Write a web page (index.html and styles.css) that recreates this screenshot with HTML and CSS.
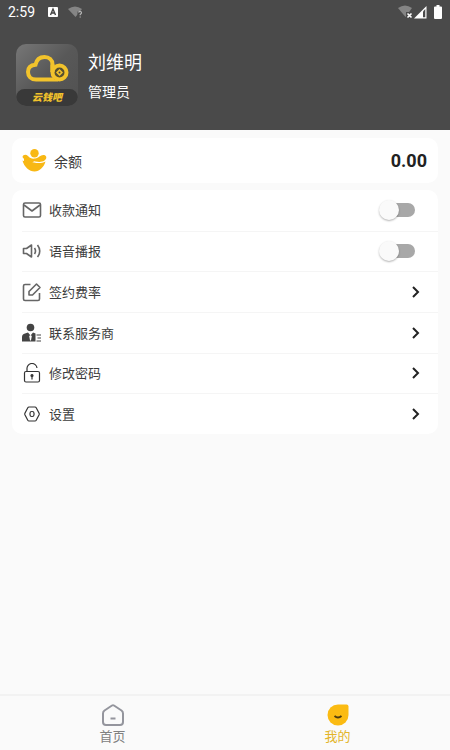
FILE: index.html
```html
<!DOCTYPE html>
<html lang="zh-CN">
<head>
<meta charset="utf-8">
<meta name="viewport" content="width=device-width, initial-scale=1">
<title>我的</title>
<link rel="stylesheet" href="styles.css">
</head>
<body>
<header class="header">
  <div class="status">
    <time class="clock">2:59</time>
    <svg class="status-app" width="10" height="10" viewBox="0 0 10 10"><rect width="10" height="10" rx="1" fill="#fff"/><path d="M2.500 8 5 2 7.500 8M3.500 6h3" fill="none" stroke="#444" stroke-width="1.400"/></svg>
    <svg width="16" height="12" viewBox="0 0 16 12"><path d="M0 3Q7 -2 14 3L7.500 11Z" fill="#858585"/><path d="M9.500 5.500h5V12h-5z" fill="#4a4a4a"/><path d="M10.500 6.500q1-1.500 2.500-.8 1.300 1.300-.8 2.700v.8M12.200 10.500v1" fill="none" stroke="#b5b5b5" stroke-width="1.200"/></svg>
    <span class="status-right">
      <svg width="15" height="14" viewBox="0 0 15 14"><path d="M0 3Q7 -2 14 3L7.500 12Z" fill="#858585"/><path d="M8 7h7v7H8z" fill="#4a4a4a"/><path d="m9.500 8.500 4 4m0-4-4 4" stroke="#fff" stroke-width="1.600"/></svg>
      <svg width="13" height="13" viewBox="0 0 13 13"><path d="M0 12.500 12.500 0v12.500z" fill="#fff"/><path d="M9 5.500 11.300 3v8.300H9z" fill="#4a4a4a"/></svg>
      <svg class="battery" width="8" height="14" viewBox="0 0 8 14"><path d="M2.500 0h3v1.500H7q1 0 1 1V13q0 1-1 1H1q-1 0-1-1V2.500q0-1 1-1h1.500z" fill="#fff"/></svg>
    </span>
  </div>
  <div class="profile">
    <div class="logo">
      <svg class="logo-mark" width="44" height="28" viewBox="0 0 44 28"><path d="M33 25.500H11C6 25.500 3 22 3 18c0-4.500 3-7 7.500-7.300C11.500 6 14.500 3 19.500 3c4.500 0 8 3 8 7.500V18" fill="none" stroke="#f2c32c" stroke-width="4"/><path d="M27 17c0 3.500 1 6 3.500 8" fill="none" stroke="#8d7018" stroke-width="2"/><circle cx="34.500" cy="18.500" r="7" fill="#57502f" stroke="#f2c32c" stroke-width="4"/><path d="M27.500 10.500V18" stroke="#f2c32c" stroke-width="4"/><path d="m34.500 15 3.500 3.500-3.500 3.500-3.500-3.500z" fill="#f2c32c"/><circle cx="34.500" cy="18.500" r="1" fill="#444"/></svg>
      <span class="logo-name">云钱吧</span>
    </div>
    <div class="person">
      <h1 class="name">刘维明</h1>
      <p class="role">管理员</p>
    </div>
  </div>
</header>
<main class="content">
  <section class="card balance">
    <svg width="25" height="23" viewBox="0 0 25 23"><circle cx="12.500" cy="4.200" r="4.200" fill="#f8b814"/><path d="M.5 8C1 5.500 4 5 6 7c2 2.200 4 3 7 2.500 4-.7 5.500-4 9-3.500 3 .6 3 4 .5 5.500C19 14 14 12.500 9 11.800 5 11.300 2 11 .5 8Z" fill="#f8b814"/><path d="M.5 11.500C4 13.500 8 12.500 12 13.500c4 1 8 .8 11.500-1-1.500 5.500-6 10-11 10S2 18 .5 11.500Z" fill="#f8b814"/><path d="M2 9h6l4 3.500L8 15 2 13z" fill="#f8b814"/></svg>
    <h2 class="balance-label">余额</h2>
    <strong class="amount">0.00</strong>
  </section>
  <ul class="card list">
    <li class="row">
      <label class="item">
        <svg class="icon" viewBox="0 0 20 20"><rect x="1.500" y="3" width="17" height="14" rx="1.500"/><path d="m2 5 8 6 8-6"/></svg>
        <span class="text">收款通知</span><input class="switch" type="checkbox" role="switch">
      </label>
    </li>
    <li class="row">
      <label class="item">
        <svg class="icon" viewBox="0 0 20 20"><path d="M1.500 7.500h3L9.500 4v12l-5-3.500h-3zM12.500 7q2 3 0 6M15.500 4q4.500 6 0 12"/></svg>
        <span class="text">语音播报</span><input class="switch" type="checkbox" role="switch">
      </label>
    </li>
    <li class="row">
      <a class="item" href="#rate">
        <svg class="icon" viewBox="0 0 20 20"><path d="M8.500 2.500H3q-1.500 0-1.500 1.500v13q0 1.500 1.500 1.500h13q1.500 0 1.500-1.500v-6M7 13V9.500L14.500 2l3.500 3.500-7.500 7.500z"/></svg>
        <span class="text">签约费率</span><svg class="arrow" viewBox="0 0 8 12"><path d="m1 1 5 5-5 5"/></svg>
      </a>
    </li>
    <li class="row">
      <a class="item" href="#service">
        <svg class="icon solid" viewBox="0 0 20 20"><circle cx="8.500" cy="4.500" r="3.800"/><path d="M0 18.500v-4.500q0-2.800 3-3.500l3-1 2.500 3 2.500-3 2.500 1v8zM14.500 11.500h4.500v1h-4.500zM15.500 14.500h3.500v1h-3.500zM14.500 17.500h4.500v1h-4.500z"/><path d="m8.500 12 1.300 1-.8 4.500H8L7.200 13z" fill="#fff"/></svg>
        <span class="text">联系服务商</span><svg class="arrow" viewBox="0 0 8 12"><path d="m1 1 5 5-5 5"/></svg>
      </a>
    </li>
    <li class="row">
      <a class="item" href="#password">
        <svg class="icon dark" viewBox="0 0 20 20"><rect x="2.500" y="8.500" width="15" height="10.500" rx="1.500"/><path d="M5 8V6a5 5 0 0 1 10-1M10 13v3.500"/><circle cx="10" cy="12.500" r="1" fill="#333"/></svg>
        <span class="text">修改密码</span><svg class="arrow" viewBox="0 0 8 12"><path d="m1 1 5 5-5 5"/></svg>
      </a>
    </li>
    <li class="row">
      <a class="item" href="#settings">
        <svg class="icon dark" viewBox="0 0 20 20"><path d="M7 3h6q.8 0 1.200.7l2.900 5.600q.3.700 0 1.400l-2.900 5.600q-.4.700-1.200.7H7q-.8 0-1.200-.7l-2.900-5.600q-.3-.7 0-1.400l2.900-5.600Q6.200 3 7 3z"/><rect x="8" y="7.500" width="4" height="5" rx="1.800"/></svg>
        <span class="text">设置</span><svg class="arrow" viewBox="0 0 8 12"><path d="m1 1 5 5-5 5"/></svg>
      </a>
    </li>
  </ul>
</main>
<nav class="tabs">
  <a class="tab" href="#home">
    <svg width="24" height="24" viewBox="0 0 24 24"><path d="M11 2.500 3.500 7.500Q2 8.500 2 10.500V19q0 3 3 3h14q3 0 3-3v-8.500q0-2-1.500-3L13 2.500q-1-.6-2 0z" fill="none" stroke="#94959d" stroke-width="2"/><path d="M9.500 15.500h5" stroke="#94959d" stroke-width="2"/></svg>
    <span>首页</span>
  </a>
  <a class="tab active" href="#me" aria-current="page">
    <svg width="24" height="24" viewBox="0 0 24 24"><path d="M12 1.500h8.500q2 0 2 2V12A10.500 10.500 0 1 1 12 1.500z" fill="#fbbb12"/><path d="M8.500 13q3.500 3 7 0" fill="none" stroke="#4c3b10" stroke-width="1.800"/></svg>
    <span>我的</span>
  </a>
</nav>
</body>
</html>
```
FILE: styles.css
```css
* {
  box-sizing: border-box;
}

body {
  margin: 0;
  min-height: 100vh;
  display: flex;
  flex-direction: column;
  background: #fafafa;
  color: #3c3c3c;
  font-family: Roboto, "Noto Sans CJK SC", sans-serif;
}

h1, h2, p, ul {
  margin: 0;
  padding: 0;
  font-weight: 400;
}

a {
  color: inherit;
  text-decoration: none;
}

svg {
  display: block;
  flex: none;
}

.header {
  height: 130px;
  background: #4a4a4a;
  color: #fff;
}

.status {
  display: flex;
  align-items: center;
  height: 24px;
  padding: 0 8px;
}

.clock {
  font-size: 14px;
  line-height: 24px;
}

.status-app {
  margin: 0 10px 0 13px;
}

.status-right {
  display: flex;
  align-items: center;
  gap: 1px;
  margin-left: auto;
}

.battery {
  margin-left: 6px;
}

.profile {
  display: flex;
  align-items: center;
  gap: 10px;
  padding: 20px 16px;
}

.logo {
  display: flex;
  flex-direction: column;
  align-items: center;
  justify-content: space-between;
  width: 62px;
  height: 62px;
  padding-top: 10px;
  border-radius: 10px;
  overflow: hidden;
  background: linear-gradient(135deg, #777, #585858 50%, #515151);
}

.logo-name {
  width: 100%;
  border-radius: 10px;
  background: #393939;
  color: #f2c32c;
  font-size: 10px;
  font-style: italic;
  font-weight: 900;
  line-height: 17px;
  text-align: center;
}

.person {
  padding-top: 4px;
}

.name {
  font-size: 18px;
  line-height: 30px;
}

.role {
  font-size: 14px;
  line-height: 28px;
}

.content {
  flex: 1;
  display: flex;
  flex-direction: column;
  gap: 7px;
  padding: 8px 12px;
}

.card {
  border-radius: 10px;
  background: #fff;
}

.balance {
  display: flex;
  align-items: center;
  gap: 7px;
  min-height: 45px;
  padding: 0 11px 0 10px;
}

.balance-label {
  padding-top: 2px;
  font-size: 14px;
  line-height: 20px;
}

.amount {
  margin-left: auto;
  color: #222;
  font-size: 18px;
  font-weight: 700;
}

.list {
  display: grid;
  grid-auto-rows: 1fr;
  min-height: 244px;
  padding-left: 10px;
  list-style: none;
}

.row {
  display: flex;
}

.row + .row {
  border-top: 1px solid #f5f5f5;
}

.item {
  flex: 1;
  display: flex;
  align-items: center;
  gap: 7px;
  padding-right: 18px;
}

.icon {
  width: 20px;
  height: 20px;
  fill: none;
  stroke: #666;
  stroke-width: 1.6;
  stroke-linejoin: round;
}

.icon.dark {
  stroke: #333;
  stroke-width: 1.2;
}

.icon.solid {
  fill: #444;
  stroke: none;
}

.text {
  flex: 1;
  padding-top: 2px;
  font-size: 13px;
  line-height: 20px;
}

.arrow {
  width: 8px;
  height: 12px;
  fill: none;
  stroke: #222;
  stroke-width: 2;
}

.switch {
  appearance: none;
  position: relative;
  width: 32px;
  height: 14px;
  margin: 0 5px 0 0;
  border-radius: 7px;
  background: #a8a8a8;
}

.switch::before {
  content: "";
  position: absolute;
  top: -3px;
  left: -4px;
  width: 20px;
  height: 20px;
  border-radius: 50%;
  background: #fafafa;
  box-shadow: 0 1px 2px rgba(0, 0, 0, 0.3);
}

.switch:checked::before {
  left: 16px;
}

.tabs {
  display: flex;
  height: 56px;
  border-top: 2px solid #f2f2f2;
}

.tab {
  flex: 1;
  display: flex;
  flex-direction: column;
  align-items: center;
  gap: 1px;
  padding-top: 7px;
  color: #808080;
  font-size: 13px;
  line-height: 18px;
}

.tab.active {
  color: #e3b52a;
}
```
